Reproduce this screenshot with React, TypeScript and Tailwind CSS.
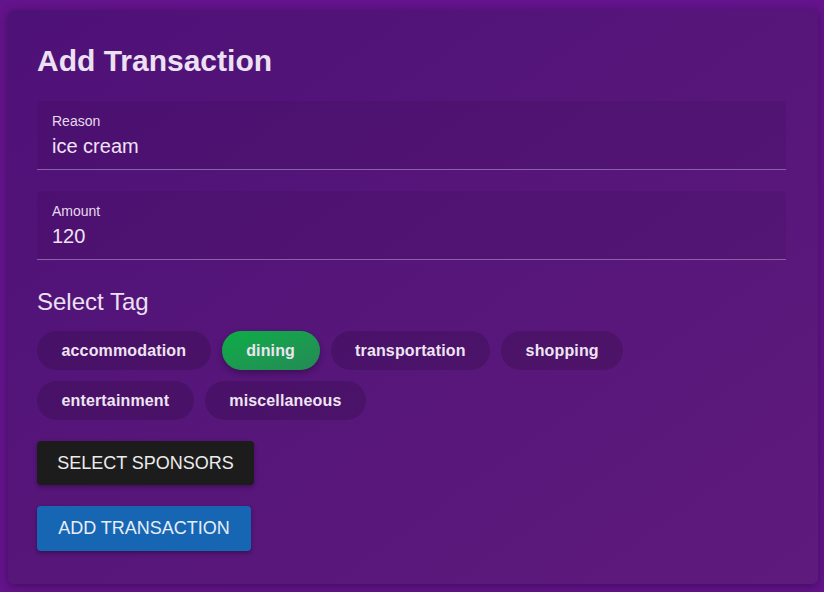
import React, { useState } from 'react';

const TAGS = ['accommodation', 'dining', 'transportation', 'shopping', 'entertainment', 'miscellaneous'];

const FONT = "font-['Liberation_Sans',Arial,sans-serif]";

function Field({ label, value }: { label: string; value: string }) {
  return (
    <div className="h-[69px] bg-black/[0.06] border-b border-[#8c5fa6] rounded-t px-[15px] pt-[12px]">
      <div className="text-[14px] leading-[16px] text-[#e6d9ee]">{label}</div>
      <div className="text-[20px] leading-[24px] mt-[5px] text-[#eee3f3]">{value}</div>
    </div>
  );
}

export default function App() {
  const [tag, setTag] = useState('dining');

  return (
    <div className={`min-h-[592px] bg-[#63138b] pt-[10px] pl-[8px] pr-[6px] pb-[8px] ${FONT}`}>
      <div className="h-[574px] rounded-md bg-gradient-to-br from-[#4e1177] to-[#5f1a7d] shadow-[0_2px_8px_rgba(0,0,0,0.35)] pl-[29px] pr-[32px] pt-[33px]">
        <h1 className="text-[30px] leading-[36px] font-bold text-[#ece1f2]">Add Transaction</h1>

        <div className="mt-[22px] flex flex-col gap-[21px]">
          <Field label="Reason" value="ice cream" />
          <Field label="Amount" value="120" />
        </div>

        <div className="mt-[28px] text-[24px] leading-[28px] text-[#ece1f2]">Select Tag</div>

        <div className="mt-[15px] flex flex-wrap gap-[11px] w-[600px]">
          {TAGS.map(t => (
            <button
              key={t}
              onClick={() => setTag(t)}
              className={`h-[39px] px-[24.5px] rounded-full text-[16px] font-bold tracking-[0.15px] text-[#efe4f3] ${
                t === tag
                  ? 'bg-gradient-to-br from-[#08ad46] to-[#238a55] shadow-[0_3px_6px_rgba(0,0,0,0.3)]'
                  : 'bg-black/[0.14]'
              }`}
            >
              {t}
            </button>
          ))}
        </div>

        <div className="mt-[21px] flex flex-col items-start gap-[21px]">
          <button className="h-[44px] w-[217px] rounded bg-[#1c1c1c] text-[18px] text-[#ececec] shadow-[0_2px_4px_rgba(0,0,0,0.3)]">
            SELECT SPONSORS
          </button>
          <button className="h-[45px] w-[214px] rounded bg-[#1766b4] text-[18px] text-[#e6eef8] shadow-[0_2px_4px_rgba(0,0,0,0.35)]">
            ADD TRANSACTION
          </button>
        </div>
      </div>
    </div>
  );
}
